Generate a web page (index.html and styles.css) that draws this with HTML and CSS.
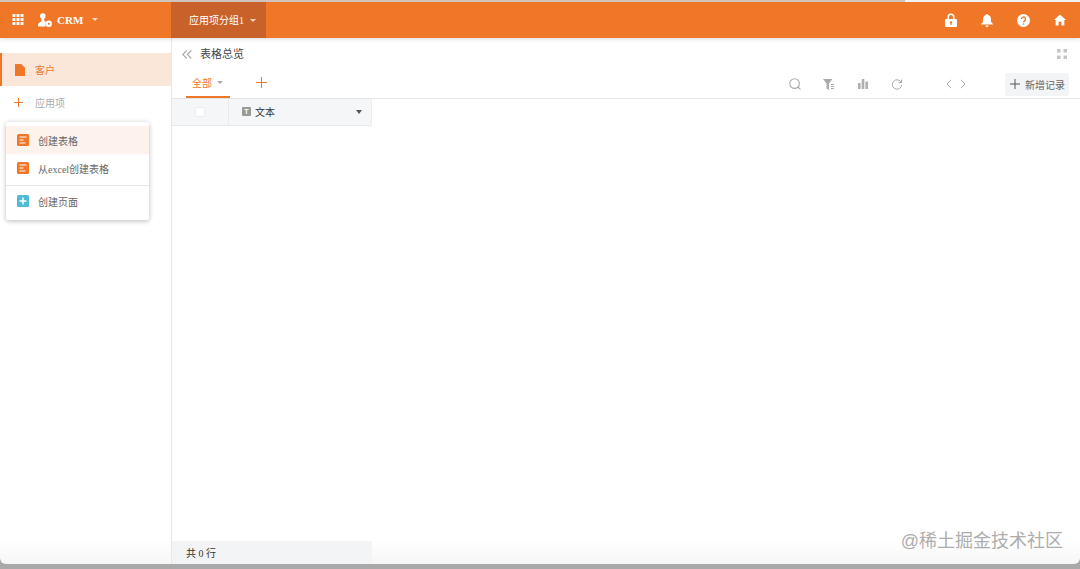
FILE: index.html

```html
<!DOCTYPE html>
<html lang="en">
<head>
    <meta charset="UTF-8">
    <meta name="viewport" content="width=device-width, initial-scale=1.0">
    <title>CRM</title>
    <link rel="stylesheet" href="styles.css">
</head>
<body>
    <div class="top-strip"></div>
    <div class="window">
        <header class="topbar">
            <div class="brand">
                <svg class="grid-icon" width="12" height="11" viewBox="0 0 12 12" fill="#fff">
                    <rect x="0" y="0" width="3.2" height="3.2"/><rect x="4.4" y="0" width="3.2" height="3.2"/><rect x="8.8" y="0" width="3.2" height="3.2"/>
                    <rect x="0" y="4.4" width="3.2" height="3.2"/><rect x="4.4" y="4.4" width="3.2" height="3.2"/><rect x="8.8" y="4.4" width="3.2" height="3.2"/>
                    <rect x="0" y="8.8" width="3.2" height="3.2"/><rect x="4.4" y="8.8" width="3.2" height="3.2"/><rect x="8.8" y="8.8" width="3.2" height="3.2"/>
                </svg>
                <svg class="user-icon" width="14" height="14" viewBox="0 0 14 14" fill="#fff">
                    <circle cx="4.800" cy="3" r="2.800"/>
                    <path d="M3.400 5h2.800v2.600L7.800 9 7.500 13.600H0v-2c0-1.800 2.200-2.400 3.400-3.200z"/>
                    <circle cx="10.800" cy="10.800" r="3.200"/>
                    <circle cx="10.800" cy="10.800" r="1" fill="#f07628"/>
                </svg>
                <span class="brand-name">CRM</span>
                <span class="caret caret-white brand-caret"></span>
            </div>
            <div class="group-tab">
                <span class="group-name">应用项分组1</span>
                <span class="caret caret-white"></span>
            </div>
            <div class="top-icons">
                <svg width="12" height="14" viewBox="0 0 12 14" fill="#fff">
                    <path d="M1 6h10a1 1 0 0 1 1 1v6a1 1 0 0 1-1 1H1a1 1 0 0 1-1-1V7a1 1 0 0 1 1-1zm5 2.200a1.300 1.300 0 0 0-.6 2.400V12h1.200v-1.400A1.300 1.300 0 0 0 6 8.200z"/>
                    <path d="M2.400 6.500V4a3.600 3.600 0 0 1 7.200 0v2.500H8V4a2 2 0 0 0-4 0v2.500z"/>
                </svg>
                <svg width="12" height="13" viewBox="0 0 12 13" fill="#fff">
                    <path d="M6 0a1 1 0 0 1 1 1c2 .5 3 2 3 4v3l2 2v.6H0V10l2-2V5c0-2 1-3.500 3-4a1 1 0 0 1 1-1z"/>
                    <path d="M4.400 11.400h3.200a1.600 1.600 0 0 1-3.200 0z"/>
                </svg>
                <svg width="13" height="13" viewBox="0 0 13 13">
                    <circle cx="6.500" cy="6.500" r="6.500" fill="#fff"/>
                    <path d="M4.500 5.100a2 2 0 1 1 3 1.700c-.7.400-1 .7-1 1.500" fill="none" stroke="#f07628" stroke-width="1.400"/>
                    <rect x="5.800" y="9.300" width="1.400" height="1.400" fill="#f07628"/>
                </svg>
                <svg width="12" height="12" viewBox="0 0 13 12" fill="#fff">
                    <path d="M6.500 0L13 6h-1.800v6H8V8H5v4H1.800V6H0z"/>
                </svg>
            </div>
        </header>

        <div class="content">
            <aside class="sidebar">
                <div class="side-item side-active">
                    <svg width="10" height="12" viewBox="0 0 10 12" fill="#f07628">
                        <path d="M0 0h6.200L10 3.800V12H0z"/>
                    </svg>
                    <span>客户</span>
                </div>
                <div class="side-item side-add">
                    <svg width="9" height="9" viewBox="0 0 9 9" stroke="#f07628"><path d="M4.500 0v9M0 4.500h9"/></svg>
                    <span>应用项</span>
                </div>
            </aside>

            <main class="main">
                <div class="title-row">
                    <svg class="collapse" width="10" height="9" viewBox="0 0 10 9" fill="none" stroke="#aaa" stroke-width="1.100">
                        <path d="M4.800 .5L.8 4.500l4 4M9.300 .5l-4 4 4 4"/>
                    </svg>
                    <span class="title">表格总览</span>
                    <svg class="expand" width="10" height="10" viewBox="0 0 10 10" fill="#c4c4c4">
                        <rect width="3.500" height="3.500"/><rect x="6.500" width="3.500" height="3.500"/><rect y="6.500" width="3.500" height="3.500"/><rect x="6.500" y="6.500" width="3.500" height="3.500"/>
                    </svg>
                </div>

                <div class="tab-row">
                    <div class="tab">
                        <span>全部</span>
                        <span class="caret caret-gray"></span>
                    </div>
                    <svg class="tab-add" width="11" height="11" viewBox="0 0 11 11" stroke="#f07628"><path d="M5.500 0v11M0 5.500h11"/></svg>
                    <div class="tools">
                        <svg class="tool" width="12" height="12" viewBox="0 0 12 12" fill="none" stroke="#aaa" stroke-width="1.100">
                            <circle cx="5.600" cy="5.600" r="4.800"/><path d="M9 9l2.400 2.400"/>
                        </svg>
                        <svg class="tool" width="12" height="11" viewBox="0 0 12 11" fill="#aaa">
                            <path d="M0 0h9.500L6 4.500V11L3.500 9.500v-5z"/><rect x="8" y="5" width="3" height="1"/><rect x="8" y="7" width="3" height="1"/><rect x="8" y="9" width="3" height="1"/>
                        </svg>
                        <svg class="tool" width="12" height="10" viewBox="0 0 12 10" fill="#b0b0b0">
                            <rect x="1" y="4" width="2.600" height="6"/><rect x="4.700" width="2.600" height="10"/><rect x="8.400" y="2.500" width="2.600" height="7.500"/>
                        </svg>
                        <svg class="tool tool-last" width="12" height="11" viewBox="0 0 11 11" fill="none" stroke="#aaa" stroke-width="1">
                            <path d="M9.800 3.500A4.700 4.700 0 1 0 10.200 6"/><path d="M10 .6v3H7"/>
                        </svg>
                        <div class="pager">
                            <svg width="6" height="10" viewBox="0 0 6 10" fill="none" stroke="#aaa"><path d="M5 .8L1 5l4 4.200"/></svg>
                            <svg width="6" height="10" viewBox="0 0 6 10" fill="none" stroke="#aaa"><path d="M1 .8L5 5 1 9.200"/></svg>
                        </div>
                        <div class="add-record">
                            <svg width="10" height="10" viewBox="0 0 10 10" stroke="#555"><path d="M5 0v10M0 5h10"/></svg>
                            <span>新增记录</span>
                        </div>
                    </div>
                </div>

                <div class="table-head">
                    <div class="check-cell"><span class="checkbox"></span></div>
                    <div class="col-cell">
                        <span class="type-badge">T</span>
                        <span class="col-name">文本</span>
                        <span class="caret caret-dark"></span>
                    </div>
                </div>

                <div class="table-body"></div>

                <div class="table-foot">共 0 行</div>
            </main>
        </div>

        <div class="create-menu">
            <div class="menu-item menu-hover">
                <svg width="12" height="12" viewBox="0 0 12 12"><rect width="12" height="12" rx="1.500" fill="#f07628"/><path d="M2.500 3h7M2.500 6h4M2.500 9h6" stroke="#fff" stroke-width="1.200"/></svg>
                <span>创建表格</span>
            </div>
            <div class="menu-item">
                <svg width="12" height="12" viewBox="0 0 12 12"><rect width="12" height="12" rx="1.500" fill="#f07628"/><path d="M2.500 3h7M2.500 6h4M2.500 9h6" stroke="#fff" stroke-width="1.200"/></svg>
                <span>从excel创建表格</span>
            </div>
            <div class="menu-line"></div>
            <div class="menu-item">
                <svg width="12" height="12" viewBox="0 0 12 12"><rect width="12" height="12" rx="1.500" fill="#4dbcd4"/><path d="M6 2.500v7M2.500 6h7" stroke="#fff" stroke-width="1.500"/></svg>
                <span>创建页面</span>
            </div>
        </div>

        <div class="watermark">@稀土掘金技术社区</div>
    </div>
</body>
</html>
```

FILE: styles.css

```css
* {
    box-sizing: border-box;
}

body {
    margin: 0;
    padding: 0 0 5px;
    height: 569px;
    overflow: hidden;
    background-color: #a9a9a9;
    font-family: 'Liberation Serif', 'Noto Sans CJK SC', serif;
    font-size: 10px;
    color: #555;
}

.top-strip {
    height: 2px;
    background: linear-gradient(90deg, #cfc5bc 905px, #f2f2f2 905px);
}

.window {
    position: relative;
    height: 562px;
    display: flex;
    flex-direction: column;
    background: linear-gradient(#fff 538px, #f6f6f6 562px);
    border-radius: 0 0 6px 6px;
    overflow: hidden;
}

/* top bar */
.topbar {
    height: 36px;
    flex-shrink: 0;
    display: flex;
    align-items: center;
    background-color: #f07628;
    color: #fff;
    box-shadow: 0 1px 4px rgba(0, 0, 0, 0.15);
    z-index: 1;
}

.brand {
    width: 171px;
    height: 100%;
    display: flex;
    align-items: center;
    padding: 0 0 1px 12px;
}

.user-icon {
    margin-left: 14px;
}

.brand-name {
    margin-left: 5px;
    font-size: 11px;
    font-weight: bold;
}

.brand-caret {
    margin-left: 9px;
}

.group-tab {
    width: 95px;
    height: 100%;
    display: flex;
    align-items: center;
    gap: 6px;
    padding-left: 18px;
    background-color: #c9622a;
    font-size: 10px;
}

.group-name {
    margin-top: -2px;
}

.top-icons {
    margin-left: auto;
    display: flex;
    align-items: center;
    gap: 24px;
    padding-right: 14px;
}

.caret {
    display: inline-block;
    width: 0;
    height: 0;
    border-left: 3px solid transparent;
    border-right: 3px solid transparent;
    border-top: 3px solid #fff;
}

.caret-white {
    border-top-color: #fbd9c4;
}

.caret-gray {
    border-top-color: #aaa;
}

.caret-dark {
    border-top-color: #555;
    border-left-width: 3.5px;
    border-right-width: 3.5px;
    border-top-width: 4px;
    margin-left: auto;
}

/* layout */
.content {
    flex: 1;
    display: flex;
    min-height: 0;
}

.sidebar {
    width: 172px;
    flex-shrink: 0;
    padding-top: 15px;
    border-right: 1px solid #e8e8e8;
}

.side-item {
    height: 33px;
    display: flex;
    align-items: center;
    font-size: 10px;
}

.side-active {
    padding-left: 13px;
    gap: 10px;
    background-color: #fbe6da;
    border-left: 2px solid #f07628;
    color: #f07628;
}

.side-add {
    padding-left: 14px;
    gap: 12px;
    color: #aaa;
}

.main {
    flex: 1;
    min-width: 0;
    display: flex;
    flex-direction: column;
}

.title-row {
    height: 34px;
    flex-shrink: 0;
    display: flex;
    align-items: center;
    padding: 0 13px 2px 10px;
}

.collapse {
    margin-right: 8px;
}

.title {
    margin-top: -2px;
    font-size: 11px;
    color: #444;
}

.expand {
    margin-left: auto;
}

.tab-row {
    height: 27px;
    flex-shrink: 0;
    display: flex;
    align-items: stretch;
    padding: 0 11px 0 14px;
    border-bottom: 1px solid #e4e4e4;
}

.tab {
    width: 44px;
    height: 26px;
    display: flex;
    align-items: center;
    gap: 5px;
    padding-left: 6px;
    padding-bottom: 3px;
    border-bottom: 2px solid #f07628;
    color: #f07628;
    font-size: 10px;
}

.tab-add {
    margin: 5px 0 0 26px;
}

.tools {
    margin-left: auto;
    display: flex;
    align-items: center;
    margin-top: -2px;
}

.tool {
    margin-right: 22px;
}

.tool-last {
    margin-right: 43px;
}

.pager {
    display: flex;
    gap: 8px;
    margin-right: 39px;
}

.add-record {
    width: 64px;
    height: 23px;
    display: flex;
    align-items: center;
    gap: 5px;
    padding-left: 5px;
    background-color: #f3f4f5;
    border-radius: 2px;
    font-size: 10px;
    color: #666;
}

/* table */
.table-head {
    width: 200px;
    height: 27px;
    flex-shrink: 0;
    display: flex;
    background-color: #f5f6f8;
    border-bottom: 1px solid #e9e9e9;
    border-right: 1px solid #eee;
}

.check-cell {
    width: 57px;
    display: flex;
    align-items: center;
    justify-content: center;
    border-right: 1px solid #eaeaea;
}

.checkbox {
    width: 10px;
    height: 10px;
    background-color: #fff;
    border: 1px solid #eee;
    border-radius: 1px;
}

.col-cell {
    flex: 1;
    display: flex;
    align-items: center;
    padding: 0 9px 0 13px;
    gap: 4px;
}

.type-badge {
    width: 9px;
    height: 9px;
    margin-top: -1px;
    display: flex;
    align-items: center;
    justify-content: center;
    background-color: #999;
    border-radius: 1px;
    color: #fff;
    font-family: 'Liberation Sans', sans-serif;
    font-size: 7px;
    font-weight: bold;
}

.col-name {
    margin-top: -2px;
    font-size: 10px;
    color: #333;
}

.table-body {
    flex: 1;
}

.table-foot {
    width: 200px;
    height: 23px;
    flex-shrink: 0;
    padding-left: 14px;
    line-height: 26px;
    background-color: #f3f4f5;
    font-size: 10px;
    color: #333;
}

/* create dropdown */
.create-menu {
    position: absolute;
    left: 6px;
    top: 120px;
    width: 143px;
    height: 98px;
    padding-top: 4px;
    background-color: #fff;
    border-radius: 2px;
    box-shadow: 0 1px 5px rgba(0, 0, 0, 0.28);
}

.menu-item {
    height: 28px;
    display: flex;
    align-items: center;
    gap: 9px;
    padding-left: 11px;
    font-size: 10px;
    color: #666;
}

.menu-hover {
    background-color: #fdf3ec;
}

.menu-line {
    height: 1px;
    margin: 3px 0 1px;
    background-color: #e6e6e6;
}

.watermark {
    position: absolute;
    right: 17px;
    top: 527px;
    font-family: 'Liberation Sans', 'Noto Sans CJK SC', sans-serif;
    font-size: 18px;
    line-height: 24px;
    color: #adadad;
}
```
